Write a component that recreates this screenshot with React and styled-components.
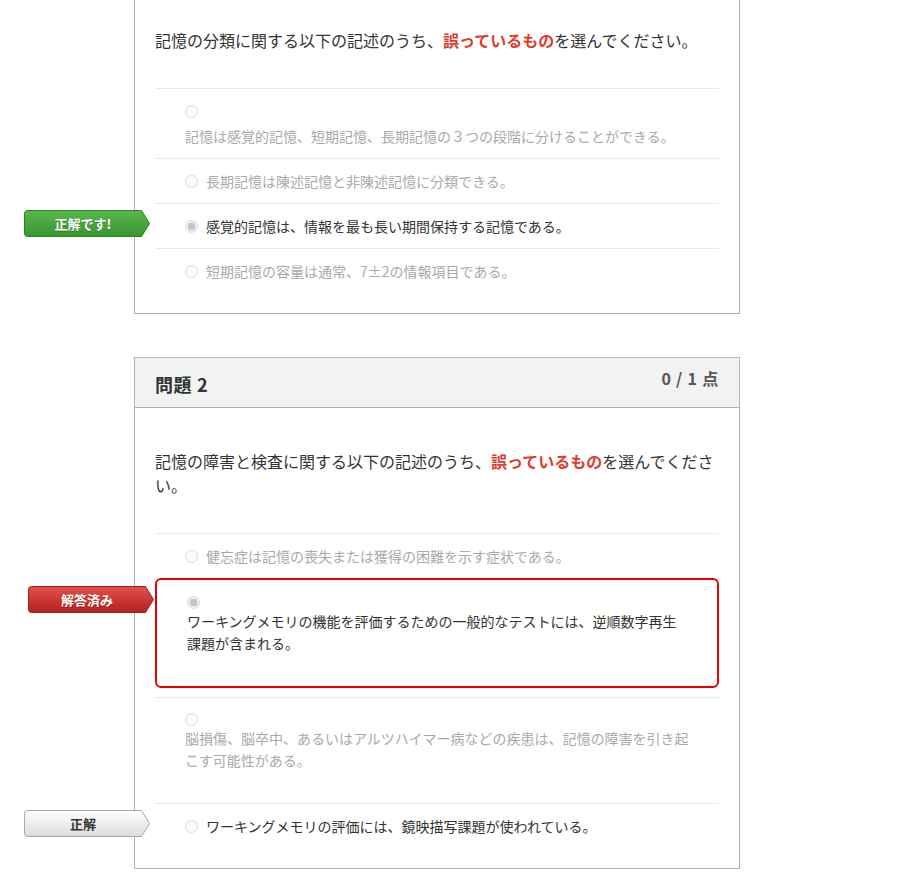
import React from "react";
import styled, { createGlobalStyle } from "styled-components";

const GlobalStyle = createGlobalStyle`
  html, body {
    margin: 0;
    padding: 0;
    background: #fff;
  }
  body {
    font-family: "Noto Sans CJK JP", "Noto Sans", "Liberation Sans", sans-serif;
    color: #333;
  }
`;

const badgeColors = {
  correct: { top: "#58b74c", bottom: "#3a9630", stroke: "#2f7f27", text: "#fff" },
  wrong: { top: "#e4504a", bottom: "#b42020", stroke: "#952020", text: "#fff" },
  answer: { top: "#ffffff", bottom: "#dcdcdc", stroke: "#a8a8a8", text: "#333" },
};

const quiz = [
  {
    id: 1,
    cut: true,
    text: "記憶の分類に関する以下の記述のうち、",
    options: [
      { label: "記憶は感覚的記憶、短期記憶、長期記憶の３つの段階に分けることができる。", wrapped: true },
      { label: "長期記憶は陳述記憶と非陳述記憶に分類できる。" },
      { label: "感覚的記憶は、情報を最も長い期間保持する記憶である。", checked: true, badge: "correct", badgeText: "正解です!" },
      { label: "短期記憶の容量は通常、7±2の情報項目である。" },
    ],
  },
  {
    id: 2,
    title: "問題 2",
    score: "0 / 1 点",
    text: "記憶の障害と検査に関する以下の記述のうち、",
    options: [
      { label: "健忘症は記憶の喪失または獲得の困難を示す症状である。" },
      {
        label: "ワーキングメモリの機能を評価するための一般的なテストには、逆順数字再生課題が含まれる。",
        checked: true,
        missed: true,
        tall: true,
        badge: "wrong",
        badgeText: "解答済み",
      },
      {
        label: "脳損傷、脳卒中、あるいはアルツハイマー病などの疾患は、記憶の障害を引き起こす可能性がある。",
        tall: true,
      },
      { label: "ワーキングメモリの評価には、鏡映描写課題が使われている。", active: true, badge: "answer", badgeText: "正解" },
    ],
  },
];

const Badge = ({ kind, children }) => {
  const c = badgeColors[kind];
  return (
    <BadgeWrap $kind={kind}>
      <svg width="127" height="28" viewBox="0 0 127 28">
        <defs>
          <linearGradient id={`g-${kind}`} x1="0" y1="0" x2="0" y2="1">
            <stop offset="0" stopColor={c.top} />
            <stop offset="1" stopColor={c.bottom} />
          </linearGradient>
        </defs>
        <path
          d="M3.5 0.5 H117.5 L125.5 13.5 L117.5 26.5 H3.5 Q0.5 26.5 0.5 23.5 V3.5 Q0.5 0.5 3.5 0.5 Z"
          fill={`url(#g-${kind})`}
          stroke={c.stroke}
          strokeWidth="1"
        />
      </svg>
      <BadgeText $color={c.text}>{children}</BadgeText>
    </BadgeWrap>
  );
};

const App = () => {
  return (
    <>
      <GlobalStyle />
      <Page>
        {quiz.map((q) => (
          <Card key={q.id} $cut={q.cut}>
            {q.title && (
              <Header>
                <Title>{q.title}</Title>
                <Score>{q.score}</Score>
              </Header>
            )}
            <Body $cut={q.cut}>
              <Question>
                {q.text}
                <Emph>誤っているもの</Emph>を選んでください。
              </Question>
              <Options>
                {q.options.map((o, i) => (
                  <Option key={i} $missed={o.missed} $tall={o.tall}>
                    {o.badge && <Badge kind={o.badge}>{o.badgeText}</Badge>}
                    <RadioDot $checked={o.checked} $stacked={o.tall} />
                    <Label $dark={o.checked || o.active} $wrapped={o.wrapped} $stacked={o.tall}>
                      {o.label}
                    </Label>
                  </Option>
                ))}
              </Options>
            </Body>
          </Card>
        ))}
      </Page>
    </>
  );
};

export default App;

const Page = styled.div`
  width: 606px;
  margin-left: 134px;
  padding-bottom: 6px;
  display: flex;
  flex-direction: column;
  gap: 43px;
`;

const Card = styled.div`
  border: 1px solid #b3b3b3;
  border-top: ${(p) => (p.$cut ? "none" : "1px solid #b3b3b3")};
  background: #fff;
`;

const Header = styled.div`
  height: 49px;
  background: #f1f2f2;
  border-bottom: 1px solid #b3b3b3;
  display: flex;
  justify-content: space-between;
  align-items: center;
  padding: 0 20px;
`;

const Title = styled.div`
  font-size: 18px;
  font-weight: 700;
  letter-spacing: 0.6px;
  color: #333;
  padding-top: 2px;
`;

const Score = styled.div`
  font-size: 16px;
  font-weight: 700;
  letter-spacing: 0.8px;
  color: #555;
  margin-top: -9px;
`;

const Body = styled.div`
  padding: ${(p) => (p.$cut ? "28px" : "41px")} 20px 20px;
`;

const Question = styled.div`
  font-size: 16px;
  line-height: 24px;
  color: #333;
  margin-bottom: 36px;
`;

const Emph = styled.span`
  color: #e03a2f;
  font-weight: 700;
`;

const Options = styled.div`
  display: flex;
  flex-direction: column;
`;

const Option = styled.div`
  position: relative;
  font-size: 14px;
  line-height: 22px;
  border-top: 1px solid #e9e9e9;
  padding: 11px 27px ${(p) => (p.$tall ? "32px" : "11px")} 30px;

  ${(p) =>
    p.$missed &&
    `
    border: 2px solid #e60000;
    border-radius: 6px;
    padding: 12px 27px 32px 30px;
    margin-bottom: 9px;
  `}
`;

const RadioDot = styled.span`
  display: ${(p) => (p.$stacked ? "block" : "inline-block")};
  vertical-align: -1px;
  width: 11px;
  height: 11px;
  border-radius: 50%;
  border: 1px solid #dadada;
  background: ${(p) =>
    p.$checked ? "radial-gradient(circle, #c4c4c4 0 3.5px, #efefef 4px)" : "#fcfcfc"};
  margin: ${(p) => (p.$stacked ? "4px 0 1px" : "0 8px 0 0")};
`;

const Label = styled.span`
  display: ${(p) => (p.$stacked ? "block" : "inline-block")};
  padding-top: ${(p) => (p.$wrapped ? "3px" : "0")};
  color: ${(p) => (p.$dark ? "#333" : "#a9a9a9")};
`;

const BadgeWrap = styled.div`
  position: absolute;
  left: ${(p) => (p.$kind === "wrong" ? "-129px" : "-131px")};
  top: 6px;
  width: 127px;
  height: 28px;

  svg {
    display: block;
  }
`;

const BadgeText = styled.span`
  position: absolute;
  left: 0;
  top: 0;
  width: 118px;
  height: 27px;
  display: flex;
  align-items: center;
  justify-content: center;
  font-size: 13px;
  font-weight: 700;
  color: ${(p) => p.$color};
  text-shadow: ${(p) => (p.$color === "#fff" ? "0 1px 0 rgba(0,0,0,0.25)" : "none")};
`;
